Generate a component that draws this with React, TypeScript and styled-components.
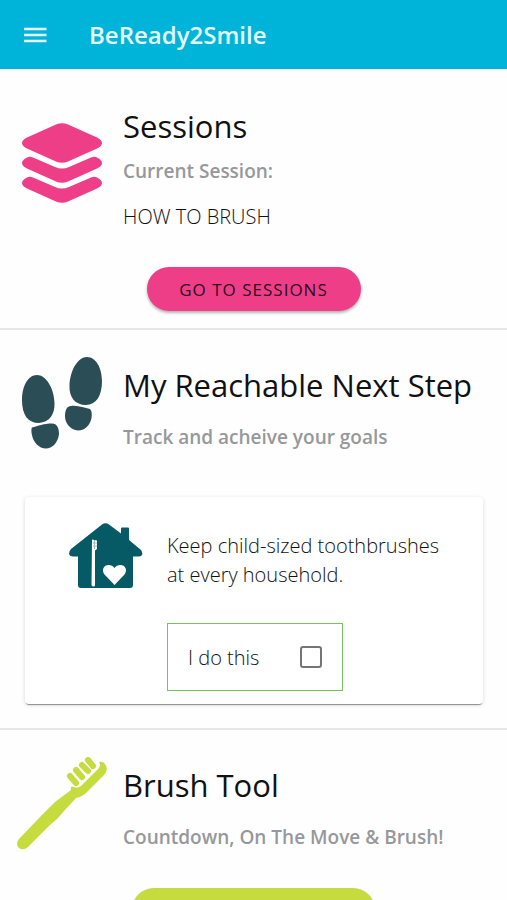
import React from "react";
import styled, { createGlobalStyle } from "styled-components";

const GlobalStyle = createGlobalStyle`
  *, *::before, *::after { box-sizing: border-box; }
  body {
    margin: 0;
    background: #fefefe;
    color: #111;
    font-family: "Open Sans", "Noto Sans", sans-serif;
  }
  h1, h2, p { margin: 0; }
`;

const Screen = styled.div`
  height: 100vh;
  overflow-y: auto;
  scrollbar-width: none;
`;

const TopBar = styled.header`
  display: flex;
  align-items: center;
  gap: 40px;
  height: 69px;
  padding: 0 22px;
  background: #00b3d9;
  color: #e6fbff;
`;

const MenuButton = styled.button`
  display: flex;
  padding: 0;
  border: 0;
  background: none;
  color: inherit;
  cursor: pointer;
`;

const AppTitle = styled.h1`
  font-size: 24px;
  line-height: 32px;
  font-weight: 600;
`;

const Section = styled.section<{ $top: number; $bottom: number }>`
  padding: ${(p) => p.$top}px 0 ${(p) => p.$bottom}px;
  border-bottom: 2px solid #e7e7e7;
`;

const Intro = styled.div`
  display: grid;
  grid-template-columns: 123px 1fr;
  align-items: start;
`;

const IconCell = styled.div<{ $top: number }>`
  display: flex;
  justify-content: center;
  padding-top: ${(p) => p.$top}px;
`;

const IntroText = styled.div<{ $top: number }>`
  padding-top: ${(p) => p.$top}px;
`;

const Heading = styled.h2`
  font-size: 31px;
  line-height: 40px;
  font-weight: 400;
  white-space: nowrap;
`;

const Subtitle = styled.p<{ $gap: number }>`
  margin-top: ${(p) => p.$gap}px;
  font-size: 19px;
  line-height: 24px;
  font-weight: 600;
  color: #96989b;
`;

const SessionName = styled.p`
  margin-top: 22px;
  font-size: 20px;
  line-height: 24px;
  font-weight: 300;
  color: #111;
`;

const Actions = styled.div<{ $gap: number }>`
  display: flex;
  justify-content: center;
  margin-top: ${(p) => p.$gap}px;
`;

const PillButton = styled.button<{ $color: string; $width: number }>`
  min-width: ${(p) => p.$width}px;
  height: 44px;
  padding: 0 30px;
  border: 0;
  border-radius: 22px;
  background: ${(p) => p.$color};
  box-shadow: 0 2px 3px rgba(0, 0, 0, 0.3);
  color: #2c0a1c;
  font-family: inherit;
  font-size: 17px;
  font-weight: 400;
  letter-spacing: 1px;
  cursor: pointer;
`;

const Card = styled.div`
  display: grid;
  grid-template-columns: 142px 1fr;
  margin: 48px 24px 0 25px;
  padding: 26px 24px 13px 0;
  border-radius: 4px;
  background: #fff;
  box-shadow: 0 2px 1px -1px rgba(0, 0, 0, 0.4), 0 1px 4px rgba(0, 0, 0, 0.14);
`;

const CardIcon = styled.div`
  display: flex;
  justify-content: flex-end;
  align-items: flex-start;
  padding-right: 24px;
`;

const CardText = styled.p`
  margin-top: 8px;
  font-size: 20px;
  line-height: 29px;
  font-weight: 300;
  color: #111;
`;

const CheckLabel = styled.label`
  display: flex;
  align-items: center;
  justify-content: space-between;
  grid-column: 2;
  width: 176px;
  height: 68px;
  margin-top: 34px;
  padding: 0 20px;
  border: 1px solid #78c35c;
  font-size: 20px;
  font-weight: 300;
  color: #111;
`;

const Checkbox = styled.input`
  appearance: none;
  width: 22px;
  height: 22px;
  margin: 0;
  border: 2px solid #757575;
  border-radius: 3px;
  background: #fff;
  &:checked {
    background: #78c35c;
  }
`;

const MenuIcon = () => (
  <svg width="27" height="20" viewBox="0 0 27 20" fill="none" stroke="currentColor" strokeWidth="2.500" aria-hidden="true">
    <path d="M2 4h22.500M2 10h22.500M2 16h22.500" />
  </svg>
);

const StackIcon = () => (
  <svg width="80" height="80" viewBox="0 0 80 80" fill="#ef3e88" aria-hidden="true">
    <path d="M34 1.500Q40-1 46 1.500L75 14.500Q80 17 80 20T75 25.500L46 38.500Q40 41 34 38.500L5 25.500Q0 23 0 20T5 14.500Z" />
    <path d="M5 34.500Q7.500 33 11 34.500L33 44Q40 47 47 44L69 34.500Q72.500 33 75 34.500Q80 37 80 40T75 45.500L46 58.500Q40 61 34 58.500L5 45.500Q0 43 0 40T5 34.500Z" />
    <path d="M5 54.500Q7.500 53 11 54.500L33 64Q40 67 47 64L69 54.500Q72.500 53 75 54.500Q80 57 80 60T75 65.500L46 78.500Q40 81 34 78.500L5 65.500Q0 63 0 60T5 54.500Z" />
  </svg>
);

const StepsIcon = () => (
  <svg width="80" height="92" viewBox="0 0 80 92" fill="#2b4d55" aria-hidden="true">
    <path d="M15 18C24 18 32 31 32.500 46C33 58 27 65 17 66C6 66 0 58 0 43C0 29 6 18 15 18Z" />
    <path d="M10 70.500C16 69 22 66.500 30 66.500C35 66.500 37 71 37 77C36 86 30 91.500 24 91.500C17 91.500 11 85 10 78C9 74 9.500 71 10 70.500Z" />
    <path d="M65 0C74 0 80 11 80 24C80 39 74 48 64 48C53 48 47 40 47.500 29C48 13 56 0 65 0Z" />
    <path d="M49 49C56 48 62 51 68 52C70 54 70 57 69.500 61C68 69 62 73.500 56 73.500C49 73 43 67 43 59C43 53 45 49 49 49Z" />
  </svg>
);

const HouseIcon = () => (
  <svg width="74" height="66" viewBox="0 0 74 66" aria-hidden="true">
    <path
      fill="#055a66"
      d="M33 1.500Q36.500-1 40 1.500L52 10.500V5.500Q52 4.500 53 4.500H59Q60 4.500 60 5.500V17L72 27Q74 30 73 32Q72 33.500 69 33.500H64V62Q64 65 61 65H12Q9 65 9 62V33.500H4Q1 33.500 0 31Q0 28 2 26Z"
    />
    <path fill="#fff" d="M23 16.500L28 17.500V26L26 27.500V62Q26 63.500 24.500 63.500T22.500 62Z" />
    <path stroke="#9ebec3" strokeWidth="1" d="M25.500 17V26M24 20h4M24 23h4" />
    <path fill="#fff" d="M45.500 62L35.500 51.500C32 47 35 42 39.500 42Q43.500 42 45.500 45Q47.500 42 51.500 42C56 42 59 47 55.500 51.500Z" />
  </svg>
);

const BrushIcon = () => (
  <svg width="90" height="94" viewBox="0 0 90 94" aria-hidden="true">
    <path
      fill="#c5db3e"
      d="M88 7Q92 12 87 18L68 37Q64 40 59 41L47 54Q41 62 33 68L11 90Q6 94 2 91Q-2 87 2 82L25 58Q32 51 38 45L54 33Q53 28 57 30Q61 32 65 28L82 11Q84 8 82 5Q86 4 88 7Z"
    />
    <path
      stroke="#c5db3e"
      strokeWidth="6"
      strokeLinecap="round"
      d="M53 19L59 26M59 13L65 20M65 8L71 14M71 3L76 9"
    />
  </svg>
);

export default function App() {
  return (
    <Screen>
      <GlobalStyle />
      <TopBar>
        <MenuButton type="button" aria-label="Menu">
          <MenuIcon />
        </MenuButton>
        <AppTitle>BeReady2Smile</AppTitle>
      </TopBar>
      <main>
        <Section $top={37} $bottom={17}>
          <Intro>
            <IconCell $top={17}>
              <StackIcon />
            </IconCell>
            <IntroText $top={0}>
              <Heading>Sessions</Heading>
              <Subtitle $gap={13}>Current Session:</Subtitle>
              <SessionName>HOW TO BRUSH</SessionName>
            </IntroText>
          </Intro>
          <Actions $gap={38}>
            <PillButton type="button" $color="#ef3e88" $width={214}>
              GO TO SESSIONS
            </PillButton>
          </Actions>
        </Section>
        <Section $top={27} $bottom={24}>
          <Intro>
            <IconCell $top={0}>
              <StepsIcon />
            </IconCell>
            <IntroText $top={8}>
              <Heading>My Reachable Next Step</Heading>
              <Subtitle $gap={20}>Track and acheive your goals</Subtitle>
            </IntroText>
          </Intro>
          <Card>
            <CardIcon>
              <HouseIcon />
            </CardIcon>
            <CardText>Keep child-sized toothbrushes at every household.</CardText>
            <CheckLabel>
              I do this
              <Checkbox type="checkbox" />
            </CheckLabel>
          </Card>
        </Section>
        <Section $top={27} $bottom={17}>
          <Intro>
            <IconCell $top={0}>
              <BrushIcon />
            </IconCell>
            <IntroText $top={8}>
              <Heading>Brush Tool</Heading>
              <Subtitle $gap={20}>Countdown, On The Move &amp; Brush!</Subtitle>
            </IntroText>
          </Intro>
          <Actions $gap={37}>
            <PillButton type="button" aria-label="Brush Tool" $color="#c5db3e" $width={243} />
          </Actions>
        </Section>
      </main>
    </Screen>
  );
}
